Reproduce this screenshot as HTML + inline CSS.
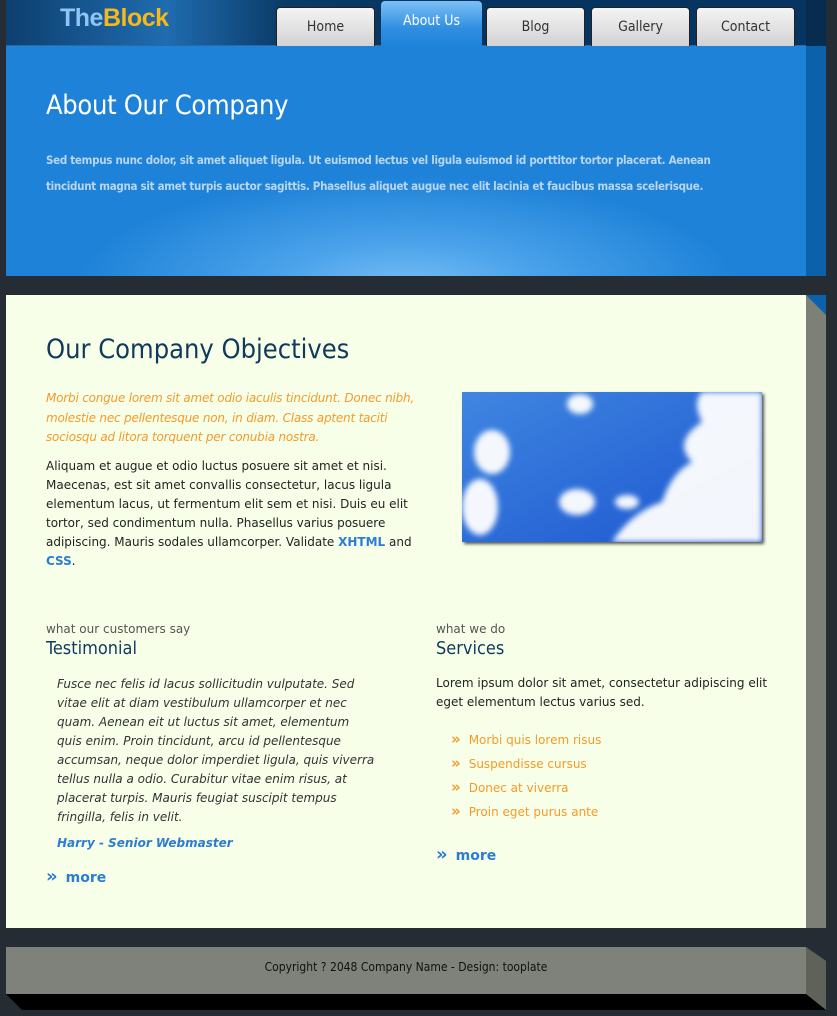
<!DOCTYPE html>
<html><head><meta charset="utf-8"><style>
*{margin:0;padding:0;box-sizing:border-box}
body{width:837px;height:1016px;background:#262c33;font-family:"DejaVu Sans","Liberation Sans",sans-serif;font-size:12px;color:#222;position:relative;overflow:hidden}
.abs{position:absolute}
#hdr{left:6px;top:0;width:800px;height:46px;background:linear-gradient(90deg,#0d3f6e 0%,#1f6cb0 20%,#0a3a66 35%,#053461 60%,#063562 100%);border-bottom:1px solid #2a6aa3}
#logo{left:60px;top:4px;font-family:"Liberation Sans",sans-serif;font-weight:bold;font-size:25px;color:#8fc5f5;letter-spacing:-0.5px}
#logo span{color:#f6b81c}
.tab{top:7px;height:39px;width:99px;background:linear-gradient(#f4f4f4,#d2d2d2);border:1px solid #222;border-bottom:none;border-radius:4px 4px 0 0;text-align:center;line-height:38px;font-size:14px;color:#333;font-family:"DejaVu Sans Condensed","DejaVu Sans",sans-serif}
.tab.act{top:1px;height:46px;background:linear-gradient(#7cc0f6,#2f8ee0 60%,#1e82d8);color:#fff;border:none;line-height:40px}
#ban{left:6px;top:46px;width:800px;height:230px;background:radial-gradient(ellipse 330px 110px at 400px 240px,#74bdf5 0%,#4aa2ea 40%,#1e82d8 100%)}
#banside{left:806px;top:46px;width:20px;height:230px;background:#0b62ab}
#hdrside{left:806px;top:0;width:20px;height:60px;background:#072c4f;clip-path:polygon(0 0,100% 0,100% 100%,0 76%)}
#ban h1{position:absolute;left:40px;top:44px;font-family:"DejaVu Sans Condensed","DejaVu Sans",sans-serif;font-weight:normal;font-size:27px;color:#fff;letter-spacing:-0.3px}
#ban p{position:absolute;left:40px;top:101px;width:715px;font-family:"DejaVu Sans Condensed","DejaVu Sans",sans-serif;font-weight:bold;font-size:11.5px;letter-spacing:-0.3px;line-height:26px;color:#b8d6f2}
#main{left:6px;top:295px;width:800px;height:633px;background:#f8ffe8}
#mainside{left:806px;top:295px;width:20px;height:633px;background:#7d8077}
#mainside:before{content:"";position:absolute;left:0;top:0;width:20px;height:20px;background:#0b62ab;clip-path:polygon(0 0,100% 0,100% 100%)}
h2{font-family:"DejaVu Sans Condensed","DejaVu Sans",sans-serif;font-weight:normal;color:#0f3a5c}
.or{color:#f39a2c}
a{color:#2b7cd2;font-weight:bold;text-decoration:none}
#foot{left:6px;top:947px;width:800px;height:47px;background:#7f827a;text-align:center;line-height:40px;font-family:"DejaVu Sans Condensed","DejaVu Sans",sans-serif;font-size:12px;color:#111}
#footside{left:806px;top:947px;width:20px;height:63px;background:#5f6259;clip-path:polygon(0 0,100% 22%,100% 100%,0 75%)}
#footbot{left:6px;top:994px;width:820px;height:16px;background:#000;clip-path:polygon(0 0,800px 0,820px 16px,16px 16px)}
.sm{font-size:12px;color:#555}
ul{list-style:none}
li{height:24px;color:#f39a2c}
.ar{color:#f39a2c;font-weight:bold;font-size:15px;margin-right:8px;line-height:12px}
.more{font-size:14px}
.more b{margin-right:8px;font-size:18px;line-height:12px}
</style></head><body>
<div class="abs" id="hdr"></div>
<div class="abs" id="hdrside"></div>
<div class="abs" id="logo">The<span>Block</span></div>
<div class="abs tab" style="left:276px">Home</div>
<div class="abs tab act" style="left:381px;width:101px">About Us</div>
<div class="abs tab" style="left:486px">Blog</div>
<div class="abs tab" style="left:591px">Gallery</div>
<div class="abs tab" style="left:696px">Contact</div>
<div class="abs" id="ban"><h1>About Our Company</h1><p>Sed tempus nunc dolor, sit amet aliquet ligula. Ut euismod lectus vel ligula euismod id porttitor tortor placerat. Aenean tincidunt magna sit amet turpis auctor sagittis. Phasellus aliquet augue nec elit lacinia et faucibus massa scelerisque.</p></div>
<div class="abs" id="banside"></div>
<div class="abs" id="main"></div>
<div class="abs" id="mainside"></div>
<h2 class="abs" style="left:46px;top:334px;font-size:27px">Our Company Objectives</h2>
<p class="abs or" style="left:46px;top:389px;width:385px;font-style:italic;line-height:19.5px;letter-spacing:-0.2px">Morbi congue lorem sit amet odio iaculis tincidunt. Donec nibh, molestie nec pellentesque non, in diam. Class aptent taciti sociosqu ad litora torquent per conubia nostra.</p>
<p class="abs" style="left:46px;top:457px;width:372px;line-height:19px">Aliquam et augue et odio luctus posuere sit amet et nisi. Maecenas, est sit amet convallis consectetur, lacus ligula elementum lacus, ut fermentum elit sem et nisi. Duis eu elit tortor, sed condimentum nulla. Phasellus varius posuere adipiscing. Mauris sodales ullamcorper. Validate <a>XHTML</a> and <a>CSS</a>.</p>
<svg class="abs" style="left:462px;top:392px;box-shadow:2px 2px 3px #555" width="300" height="150" viewBox="0 0 300 150">
<defs><linearGradient id="sk" x1="0" y1="0" x2="1" y2="1"><stop offset="0" stop-color="#3f86e0"/><stop offset="1" stop-color="#1c55d0"/></linearGradient><filter id="bl"><feGaussianBlur stdDeviation="3"/></filter></defs>
<rect width="300" height="150" fill="url(#sk)"/>
<g fill="#fff" filter="url(#bl)" opacity="0.95">
<path d="M240 0 L300 0 L300 150 L150 150 Q170 120 200 110 Q210 80 230 70 Q210 50 240 30 Q230 10 240 0Z"/>
<ellipse cx="30" cy="60" rx="18" ry="22"/><ellipse cx="18" cy="115" rx="18" ry="28"/>
<ellipse cx="115" cy="110" rx="18" ry="13"/><ellipse cx="165" cy="110" rx="12" ry="7"/>
<ellipse cx="118" cy="12" rx="13" ry="10"/>
</g></svg>
<div class="abs sm" style="left:46px;top:622px">what our customers say</div>
<h2 class="abs" style="left:46px;top:638px;font-size:18px">Testimonial</h2>
<p class="abs" style="left:57px;top:675px;width:320px;font-style:italic;line-height:19px;color:#333">Fusce nec felis id lacus sollicitudin vulputate. Sed vitae elit at diam vestibulum ullamcorper et nec quam. Aenean eit ut luctus sit amet, elementum quis enim. Proin tincidunt, arcu id pellentesque accumsan, neque dolor imperdiet ligula, quis viverra tellus nulla a odio. Curabitur vitae enim risus, at placerat turpis. Mauris feugiat suscipit tempus fringilla, felis in velit.</p>
<a class="abs" style="left:57px;top:836px;font-style:italic">Harry - Senior Webmaster</a>
<a class="abs more" style="left:46px;top:870px"><b>»</b>more</a>
<div class="abs sm" style="left:436px;top:622px">what we do</div>
<h2 class="abs" style="left:436px;top:638px;font-size:18px">Services</h2>
<p class="abs" style="left:436px;top:674px;width:340px;line-height:19px">Lorem ipsum dolor sit amet, consectetur adipiscing elit eget elementum lectus varius sed.</p>
<ul class="abs" style="left:451px;top:733px"><li><span class="ar">»</span>Morbi quis lorem risus</li><li><span class="ar">»</span>Suspendisse cursus</li><li><span class="ar">»</span>Donec at viverra</li><li><span class="ar">»</span>Proin eget purus ante</li></ul>
<a class="abs more" style="left:436px;top:848px"><b>»</b>more</a>
<div class="abs" id="foot">Copyright ? 2048 Company Name - Design: tooplate</div>
<div class="abs" id="footside"></div>
<div class="abs" id="footbot"></div>
</body></html>
